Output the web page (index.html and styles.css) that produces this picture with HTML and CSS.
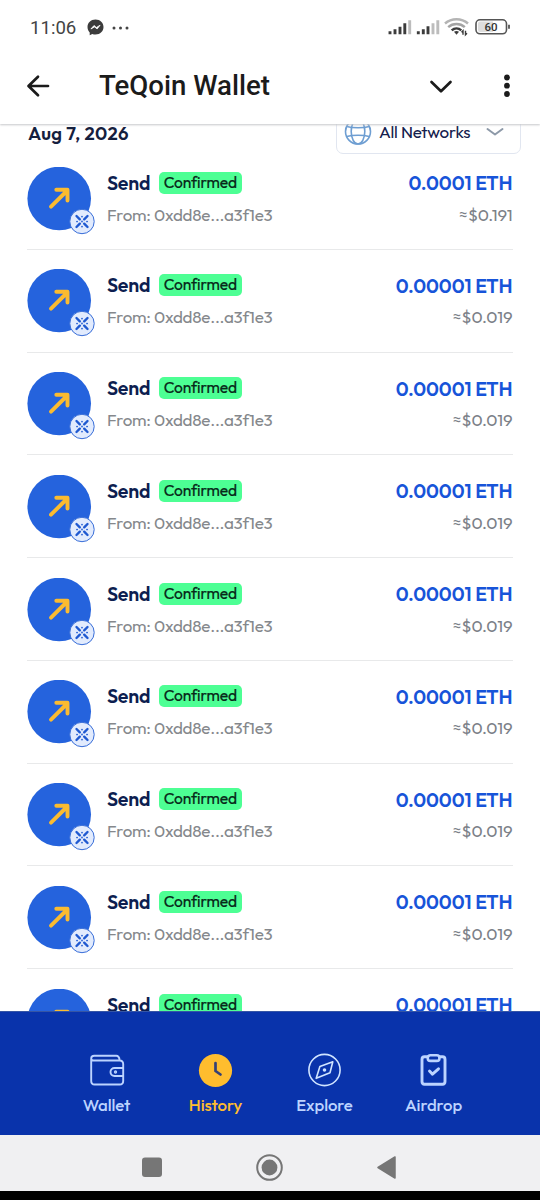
FILE: index.html
```html
<!DOCTYPE html>
<html lang="en">
<head>
<meta charset="utf-8">
<title>TeQoin Wallet</title>
<link rel="stylesheet" href="styles.css">
</head>
<body>
<svg class="defs" width="0" height="0">
  <symbol id="send" viewBox="0 0 68 68">
    <circle cx="32.2" cy="31.5" r="31.8" fill="#2563dd"/>
    <path d="M24 39.700 40.300 23.500M29.300 22.700H40.500V33.500" fill="none" stroke="#fbbb30" stroke-width="3.900" stroke-linecap="round" stroke-linejoin="round"/>
    <circle cx="55" cy="54.5" r="12.2" fill="#e2ebfd" stroke="#376dd8"/>
    <g fill="none" stroke="#1f59d1" stroke-linecap="round">
      <path d="M49.5 49 52.800 52.300M57.200 56.700 60.5 60M60.5 49 57.200 52.300M52.800 56.700 49.5 60" stroke-width="2.400"/>
      <path d="M55 49.500v.1M55 59.500v.1M50 54.500h.1M60 54.500h.1M55 54.400v.2" stroke-width="1.700"/>
    </g>
  </symbol>
</svg>
<div class="phone">
  <div class="status">
    <span class="time">11:06</span>
    <svg class="messenger" width="17" height="17" viewBox="0 0 17 17"><path d="M8.5.5C3.8.5.5 3.8.5 8c0 2.200.8 4 2.200 5.400v2.800l2.600-1.300c1 .4 2 .6 3.200.6 4.700 0 8-3.200 8-7.500S13.200.5 8.500.5Z" fill="#3c3c3c"/><path d="m3.900 10 3.100-3.500 2.400 2 3.700-2.300-3 3.700-2.500-2Z" fill="#fff" stroke="#fff" stroke-width=".8" stroke-linejoin="round"/></svg>
    <svg class="dots" width="18" height="4" viewBox="0 0 18 4" fill="#444"><circle cx="2" cy="2" r="1.500"/><circle cx="8.500" cy="2" r="1.500"/><circle cx="15" cy="2" r="1.500"/></svg>
    <svg class="signals" width="125" height="20" viewBox="0 0 125 20">
      <g stroke="#3c3c3c" stroke-width="2.900"><path d="M2 13.200v3M7 11.200v5M12 8.700v7.500M16.800 5.200v11M30.300 13.200v3M35.300 11.200v5M40 8.200v8"/><path stroke="#bcbcbc" d="M21.700 2.200v14M45 5.200v11M49.800 2.200v14"/></g>
      <g fill="none" stroke-width="2.500"><path stroke="#b4b4b4" d="M57 5.500C63.500-.1 73.500-.1 80 5.500"/><path stroke="#a4a4a4" d="M60.200 9.100c4.700-4.100 11.900-4.100 16.600 0"/><path stroke="#3c3c3c" d="M63.700 12.400c2.800-2.500 6.800-2.500 9.600 0"/></g>
      <path d="m66 13.800 2.500 3 2.500-3q-2.500-1.600-5 0Z" fill="#3c3c3c"/>
      <path d="M75 16.700v-4l-1.500 1.500M77.500 12.700v4l1.500-1.500" fill="none" stroke="#3c3c3c" stroke-width="1.400"/>
      <rect x="88" y="1.800" width="30.500" height="14" rx="4" fill="#fff" stroke="#555" stroke-width="1.600"/>
      <path d="M92 3.500h13v10.500H92q-2 0-2-2V5.500q0-2 2-2Z" fill="#dedede"/>
      <path d="M121 6.800v4" stroke="#555" stroke-width="1.800"/>
      <text x="103" y="12.900" text-anchor="middle" class="charge">60</text>
    </svg>
  </div>
  <header class="appbar">
    <svg class="back" width="24" height="24" viewBox="0 0 24 24" fill="none" stroke="#1b1b1b" stroke-width="2.700" stroke-linecap="round" stroke-linejoin="round"><path d="M22 12H3M12 2.700 2.500 12l9.500 9.300"/></svg>
    <h1>TeQoin Wallet</h1>
    <svg width="24" height="16" viewBox="0 0 24 16" fill="none" stroke="#1b1b1b" stroke-width="2.700" stroke-linecap="round" stroke-linejoin="round"><path d="m2.500 4 9.500 9.300L21.500 4"/></svg>
    <svg class="more" width="8" height="24" viewBox="0 0 8 24" fill="#1b1b1b"><circle cx="4" cy="3.500" r="2.900"/><circle cx="4" cy="11.700" r="2.900"/><circle cx="4" cy="20" r="2.900"/></svg>
  </header>
  <main class="history">
    <div class="list-head">
      <span class="date">Aug 7, 2026</span>
      <div class="networks">
        <svg width="28" height="28" viewBox="0 0 28 28" fill="none" stroke="#6e9ed2" stroke-width="1.600"><circle cx="14" cy="13.500" r="12.500"/><ellipse cx="14" cy="13.500" rx="6.800" ry="12.500"/><path d="M2.800 8.500c5.500 1.700 17 1.700 22.400 0M2.800 18.500c5.500-1.700 17-1.700 22.400 0"/></svg>
        <span>All Networks</span>
        <svg class="chev" width="18" height="10" viewBox="0 0 18 10" fill="none" stroke="#8d99a8" stroke-width="2" stroke-linecap="round" stroke-linejoin="round"><path d="m1.500 2 7.500 5.500L16.500 2"/></svg>
      </div>
    </div>
    <div class="rows">
      <div class="row"><svg class="avatar"><use href="#send"/></svg><div class="info"><div class="top"><b>Send</b><span class="tag">Confirmed</span></div><div class="from">From: 0xdd8e...a3f1e3</div></div><div class="amount"><div class="eth">0.0001 ETH</div><div class="usd">≈$0.191</div></div></div>
      <div class="row"><svg class="avatar"><use href="#send"/></svg><div class="info"><div class="top"><b>Send</b><span class="tag">Confirmed</span></div><div class="from">From: 0xdd8e...a3f1e3</div></div><div class="amount"><div class="eth">0.00001 ETH</div><div class="usd">≈$0.019</div></div></div>
      <div class="row"><svg class="avatar"><use href="#send"/></svg><div class="info"><div class="top"><b>Send</b><span class="tag">Confirmed</span></div><div class="from">From: 0xdd8e...a3f1e3</div></div><div class="amount"><div class="eth">0.00001 ETH</div><div class="usd">≈$0.019</div></div></div>
      <div class="row"><svg class="avatar"><use href="#send"/></svg><div class="info"><div class="top"><b>Send</b><span class="tag">Confirmed</span></div><div class="from">From: 0xdd8e...a3f1e3</div></div><div class="amount"><div class="eth">0.00001 ETH</div><div class="usd">≈$0.019</div></div></div>
      <div class="row"><svg class="avatar"><use href="#send"/></svg><div class="info"><div class="top"><b>Send</b><span class="tag">Confirmed</span></div><div class="from">From: 0xdd8e...a3f1e3</div></div><div class="amount"><div class="eth">0.00001 ETH</div><div class="usd">≈$0.019</div></div></div>
      <div class="row"><svg class="avatar"><use href="#send"/></svg><div class="info"><div class="top"><b>Send</b><span class="tag">Confirmed</span></div><div class="from">From: 0xdd8e...a3f1e3</div></div><div class="amount"><div class="eth">0.00001 ETH</div><div class="usd">≈$0.019</div></div></div>
      <div class="row"><svg class="avatar"><use href="#send"/></svg><div class="info"><div class="top"><b>Send</b><span class="tag">Confirmed</span></div><div class="from">From: 0xdd8e...a3f1e3</div></div><div class="amount"><div class="eth">0.00001 ETH</div><div class="usd">≈$0.019</div></div></div>
      <div class="row"><svg class="avatar"><use href="#send"/></svg><div class="info"><div class="top"><b>Send</b><span class="tag">Confirmed</span></div><div class="from">From: 0xdd8e...a3f1e3</div></div><div class="amount"><div class="eth">0.00001 ETH</div><div class="usd">≈$0.019</div></div></div>
      <div class="row"><svg class="avatar"><use href="#send"/></svg><div class="info"><div class="top"><b>Send</b><span class="tag">Confirmed</span></div></div><div class="amount"><div class="eth">0.00001 ETH</div></div></div>
    </div>
  </main>
  <nav class="tabs">
    <a class="tab"><svg width="36" height="36" viewBox="0 0 36 36" fill="none" stroke="#bcd3ff" stroke-width="1.900" stroke-linejoin="round"><path d="M2.200 6v22q0 3.500 3.500 3.500h25q3.500 0 3.500-3.500V11q0-3.500-3.500-3.500H4.500Q2.200 7.500 2.200 5.500q0-2.700 3-2.700h22q3 0 3.500 4.700"/><path d="M34 15h-8.500a4 4 0 0 0 0 8H34"/><circle cx="26.500" cy="19" r=".7"/></svg><span>Wallet</span></a>
    <a class="tab active"><svg width="36" height="36" viewBox="0 0 36 36"><circle cx="17.500" cy="17.500" r="16.600" fill="#ffbd2e"/><path d="M17.500 10v8l5 3.500" fill="none" stroke="#354176" stroke-width="2.700" stroke-linecap="round" stroke-linejoin="round"/></svg><span>History</span></a>
    <a class="tab"><svg width="36" height="36" viewBox="0 0 36 36" fill="none" stroke="#d0e4ff" stroke-width="1.600" stroke-linejoin="round"><circle cx="17.500" cy="17" r="15.600"/><path d="m25.800 8.700-2.800 11-13.800 5.600 3.700-11.900Z"/><circle cx="17.500" cy="17" r="1" fill="#d0e4ff"/></svg><span>Explore</span></a>
    <a class="tab"><svg width="36" height="36" viewBox="0 0 36 36" fill="none" stroke="#bcd3ff" stroke-width="2.900" stroke-linecap="round" stroke-linejoin="round"><path d="M11.500 3.800h-3Q6 3.800 6 6.500v22q0 2.700 2.500 2.700h18q2.500 0 2.500-2.700v-22q0-2.700-2.500-2.700h-3"/><rect x="11.800" y="2.300" width="11.600" height="5.600" rx="2.500" stroke-width="2.600"/><path d="m13.500 18 3 3.200 6-5.400"/></svg><span>Airdrop</span></a>
  </nav>
  <div class="system">
    <svg width="22" height="28" viewBox="0 0 22 28"><rect x="1" y="3.500" width="20" height="19.500" rx="3" fill="#767676"/></svg>
    <svg width="28" height="28" viewBox="0 0 28 28"><circle cx="13.500" cy="13.500" r="12.300" fill="none" stroke="#767676" stroke-width="2"/><circle cx="13.500" cy="13.500" r="7.900" fill="#767676"/></svg>
    <svg width="22" height="28" viewBox="0 0 22 28"><path d="M1 13.500 18 3v21Z" fill="#767676" stroke="#767676" stroke-width="1.500" stroke-linejoin="round"/></svg>
  </div>
</div>
</body>
</html>
```
FILE: styles.css
```css
* { box-sizing: border-box; }
body { margin: 0; background: #000; font-family: Outfit, Lato, "Noto Sans", sans-serif; }
svg { display: block; flex: none; }
.defs { position: absolute; }
.phone { width: 540px; height: 1200px; display: flex; flex-direction: column; overflow: hidden; background: #000; }
.status { height: 54px; flex: none; display: flex; align-items: center; padding: 1px 27px 0 30px; background: #fff; }
.time { width: 57px; font: 400 18.6px/24px Roboto, sans-serif; color: #444; white-space: nowrap; padding-top: 1px; }
.dots { margin-left: 8px; }
.signals { margin-left: auto; margin-top: 1px; }
.charge { font: 500 11.5px Roboto, sans-serif; fill: #333; }
.appbar { height: 70px; flex: none; display: flex; align-items: center; padding: 0 29px 7px 26px; background: #fff; box-shadow: 0 1px 2px #c6c7ca; position: relative; clip-path: inset(0 0 -4px); }
.appbar h1 { margin: 0 auto 0 49px; font: 500 27.6px/32px Roboto, sans-serif; color: #1b1b1b; white-space: nowrap; }
.more { margin-left: 50px; }
.history { height: 887px; flex: none; overflow: hidden; background: #fff; }
.list-head { height: 44px; margin: -14.5px 0 -6.5px; padding: 0 19px 0 28px; display: flex; align-items: center; justify-content: space-between; }
.date { font-size: 18.5px; font-weight: 600; line-height: 24px; color: #15203e; letter-spacing: .3px; padding-top: 2px; }
.networks { width: 185px; height: 44px; padding: 0 16px 0 7px; display: flex; align-items: center; border: 1px solid #e1e6f0; border-radius: 7px; color: #14204d; font-size: 17px; white-space: nowrap; }
.networks span { margin-left: 7px; letter-spacing: -.25px; }
.chev { margin-left: auto; }
.rows { padding: 0 27.5px 0 27px; }
.row { height: 102.75px; display: flex; padding-top: 19.5px; border-bottom: 1px solid #e8e9ea; }
.avatar { width: 68px; height: 68px; }
.info { margin-left: 12px; padding-top: 3.5px; }
.top { display: flex; align-items: center; height: 25px; }
.top b { width: 52px; font-size: 19.5px; font-weight: 600; line-height: 24px; color: #0d1e50; letter-spacing: -.2px; }
.tag { width: 82.5px; height: 22px; border-radius: 5px; background: #4dff94; color: #08291a; text-align: center; font-size: 15.6px; font-weight: 400; line-height: 21.5px; letter-spacing: -.15px; -webkit-text-stroke: .2px #08291a; }
.from { margin-top: 7.5px; font-size: 17px; font-weight: 400; line-height: 24px; color: #85888c; white-space: nowrap; letter-spacing: -.25px; }
.amount { margin-left: auto; padding-top: 3.5px; text-align: right; white-space: nowrap; }
.eth { font-size: 19.5px; font-weight: 600; line-height: 25px; color: #1754d9; letter-spacing: -.1px; }
.usd { margin-top: 7.5px; font-size: 17px; font-weight: 400; line-height: 24px; color: #7c8188; letter-spacing: -.15px; }
.tabs { height: 124px; flex: none; display: flex; justify-content: center; background: #0933ab; padding-top: 41px; border-top: 1px solid #3555a5; }
.tab { width: 109px; display: flex; flex-direction: column; align-items: center; color: #bcd3ff; font-size: 16.8px; line-height: 22px; font-weight: 500; letter-spacing: -.1px; }
.tab span { margin-top: 5px; }
.active { color: #ffbd2e; }
.system { height: 56px; flex: none; display: flex; justify-content: center; align-items: center; gap: 93px; padding-top: 9px; background: #f0f0f2; }
```
